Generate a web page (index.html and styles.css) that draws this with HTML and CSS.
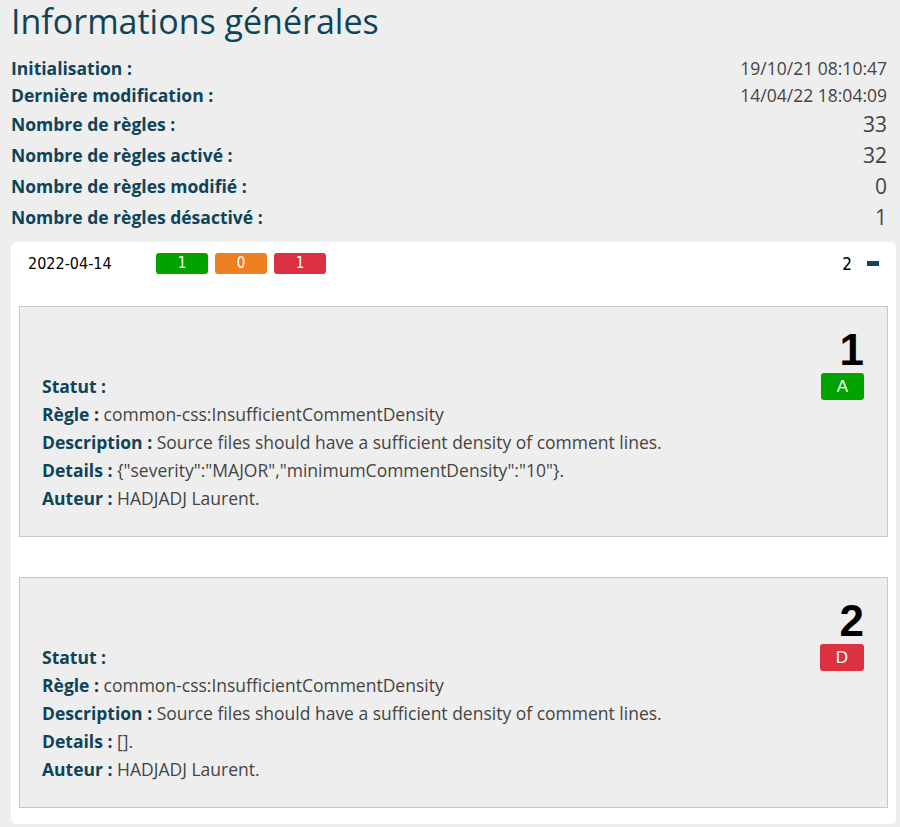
FILE: index.html
```html
<!DOCTYPE html>
<html lang="fr">
<head>
<meta charset="utf-8">
<title>Informations générales</title>
<link rel="stylesheet" href="styles.css">
</head>
<body>
<h1 class="title">Informations générales</h1>
<div class="info">
  <div class="info-row"><span class="label">Initialisation :</span><span class="val">19/10/21 08:10:47</span></div>
  <div class="info-row"><span class="label">Dernière modification :</span><span class="val">14/04/22 18:04:09</span></div>
  <div class="info-row num"><span class="label">Nombre de règles :</span><span class="val">33</span></div>
  <div class="info-row num"><span class="label">Nombre de règles activé :</span><span class="val">32</span></div>
  <div class="info-row num"><span class="label">Nombre de règles modifié :</span><span class="val">0</span></div>
  <div class="info-row num"><span class="label">Nombre de règles désactivé :</span><span class="val">1</span></div>
</div>

<div class="card">
  <div class="card-head">
    <span class="date">2022-04-14</span>
    <div class="counts">
      <span class="count green">1</span>
      <span class="count orange">0</span>
      <span class="count red">1</span>
    </div>
    <span class="total">2</span>
    <span class="collapse"></span>
  </div>

  <div class="panel">
    <div class="panel-num">1</div>
    <div class="line status"><span class="label">Statut :</span><span class="badge green">A</span></div>
    <div class="line"><span class="label">Règle :</span> common-css:InsufficientCommentDensity</div>
    <div class="line"><span class="label">Description :</span> Source files should have a sufficient density of comment lines.</div>
    <div class="line"><span class="label">Details :</span> {"severity":"MAJOR","minimumCommentDensity":"10"}.</div>
    <div class="line"><span class="label">Auteur :</span> HADJADJ Laurent.</div>
  </div>

  <div class="panel">
    <div class="panel-num">2</div>
    <div class="line status"><span class="label">Statut :</span><span class="badge red">D</span></div>
    <div class="line"><span class="label">Règle :</span> common-css:InsufficientCommentDensity</div>
    <div class="line"><span class="label">Description :</span> Source files should have a sufficient density of comment lines.</div>
    <div class="line"><span class="label">Details :</span> [].</div>
    <div class="line"><span class="label">Auteur :</span> HADJADJ Laurent.</div>
  </div>
</div>
</body>
</html>
```
FILE: styles.css
```css
html, body {
  margin: 0;
  background: #eeeeee;
}
body {
  padding: 0 4px 0 11px;
  font-family: "Open Sans", "Noto Sans", sans-serif;
  color: #444;
}
.title {
  margin: 0 0 12px 0;
  font-size: 34px;
  line-height: 42px;
  font-weight: 400;
  color: #0e4459;
}
.label {
  font-weight: 700;
  color: #0e4459;
}
.info {
  padding-right: 9px;
  margin-bottom: 10px;
}
.info-row {
  display: flex;
  justify-content: space-between;
  align-items: center;
  height: 27px;
  font-size: 17.5px;
}
.info-row .val {
  color: #444;
}
.info-row.num {
  height: 31px;
}
.info-row.num .val {
  font-size: 21px;
}
.card {
  background: #fff;
  border-radius: 6px;
  padding: 11px 8px 16px 8px;
}
.card-head {
  display: flex;
  align-items: center;
  height: 21px;
  padding: 0 9px;
  margin-bottom: 32px;
  font-family: "DejaVu Sans Condensed", "DejaVu Sans", sans-serif;
}
.date {
  width: 128px;
  font-size: 16px;
  color: #000;
}
.counts {
  display: flex;
  gap: 7px;
  flex: 1;
}
.count {
  width: 52px;
  height: 21px;
  border-radius: 3px;
  color: #fff;
  font-size: 15px;
  line-height: 21px;
  text-align: center;
}
.green { background: #00a300; }
.orange { background: #ee8022; }
.red { background: #dc3141; }
.total {
  font-size: 17px;
  color: #000;
  margin-right: 15px;
}
.collapse {
  width: 12px;
  height: 5px;
  background: #0e4459;
}
.panel {
  background: #eeeeee;
  border: 1px solid #c8c8c8;
  padding: 21px 23px 24px 22px;
}
.panel + .panel {
  margin-top: 40px;
}
.panel-num {
  text-align: right;
  font-family: "Liberation Sans", Arial, sans-serif;
  font-size: 44px;
  font-weight: 700;
  line-height: 44px;
  color: #000;
}
.line {
  height: 28px;
  line-height: 28px;
  font-size: 17.5px;
  color: #444;
}
.line.status {
  display: flex;
  justify-content: space-between;
  align-items: center;
}
.badge {
  height: 27px;
  line-height: 27px;
  padding: 0 16px;
  border-radius: 3px;
  color: #fff;
  font-family: "Liberation Sans", Arial, sans-serif;
  font-size: 17px;
}
```
